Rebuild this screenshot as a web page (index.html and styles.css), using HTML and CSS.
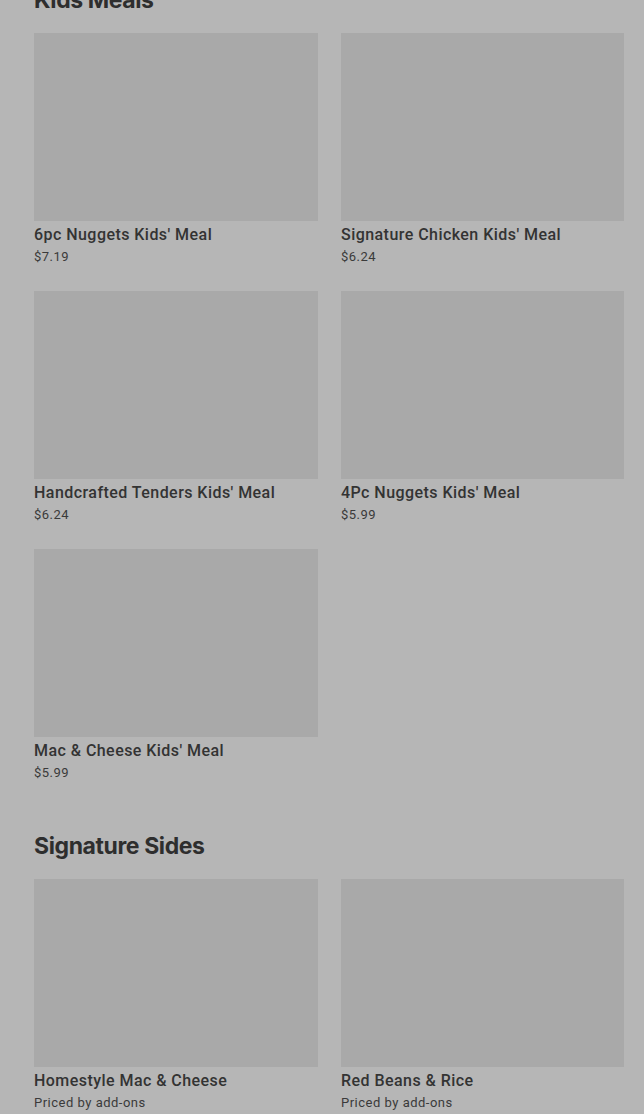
FILE: index.html
```html
<!DOCTYPE html>
<html lang="en">
<head>
  <meta charset="UTF-8">
  <title>Menu</title>
  <link rel="stylesheet" href="styles.css">
</head>
<body>

  <div class="menu">
    <section class="categoria">
      <h2>Kids Meals</h2>
      <div class="grid">
        <div class="item">
          <div class="foto"></div>
          <div class="nombre">6pc Nuggets Kids' Meal</div>
          <div class="precio">$7.19</div>
        </div>
        <div class="item">
          <div class="foto"></div>
          <div class="nombre">Signature Chicken Kids' Meal</div>
          <div class="precio">$6.24</div>
        </div>
        <div class="item">
          <div class="foto"></div>
          <div class="nombre">Handcrafted Tenders Kids' Meal</div>
          <div class="precio">$6.24</div>
        </div>
        <div class="item">
          <div class="foto"></div>
          <div class="nombre">4Pc Nuggets Kids' Meal</div>
          <div class="precio">$5.99</div>
        </div>
        <div class="item">
          <div class="foto"></div>
          <div class="nombre">Mac &amp; Cheese Kids' Meal</div>
          <div class="precio">$5.99</div>
        </div>
      </div>
    </section>

    <section class="categoria">
      <h2>Signature Sides</h2>
      <div class="grid">
        <div class="item">
          <div class="foto"></div>
          <div class="nombre">Homestyle Mac &amp; Cheese</div>
          <div class="precio">Priced by add-ons</div>
        </div>
        <div class="item">
          <div class="foto"></div>
          <div class="nombre">Red Beans &amp; Rice</div>
          <div class="precio">Priced by add-ons</div>
        </div>
      </div>
    </section>
  </div>

</body>
</html>
```

FILE: styles.css
```css
body {
  margin: 0;
  background-color: #b6b6b6;
  font-family: Roboto, 'Liberation Sans', sans-serif;
  color: #303030;
  overflow: hidden;
}

.menu {
  margin-top: -13px;
  padding: 0 20px 0 34px;
}

.categoria {
  margin-bottom: 50px;
}

h2 {
  font-family: Inter, 'Liberation Sans', sans-serif;
  font-size: 23px;
  font-weight: 700;
  letter-spacing: -0.4px;
  line-height: 26px;
  margin: 0 0 20px 0;
  color: #2e2e2e;
}

.grid {
  display: grid;
  grid-template-columns: 284px 283px;
  column-gap: 23px;
  row-gap: 24px;
}

.foto {
  height: 188px;
  background-color: #a9a9a9;
}

.nombre {
  margin-top: 2px;
  font-size: 16px;
  font-weight: 500;
  letter-spacing: 0.45px;
  line-height: 24px;
  color: #333;
}

.precio {
  font-size: 13px;
  letter-spacing: 0.5px;
  line-height: 20px;
  color: #3a3a3a;
}
```
